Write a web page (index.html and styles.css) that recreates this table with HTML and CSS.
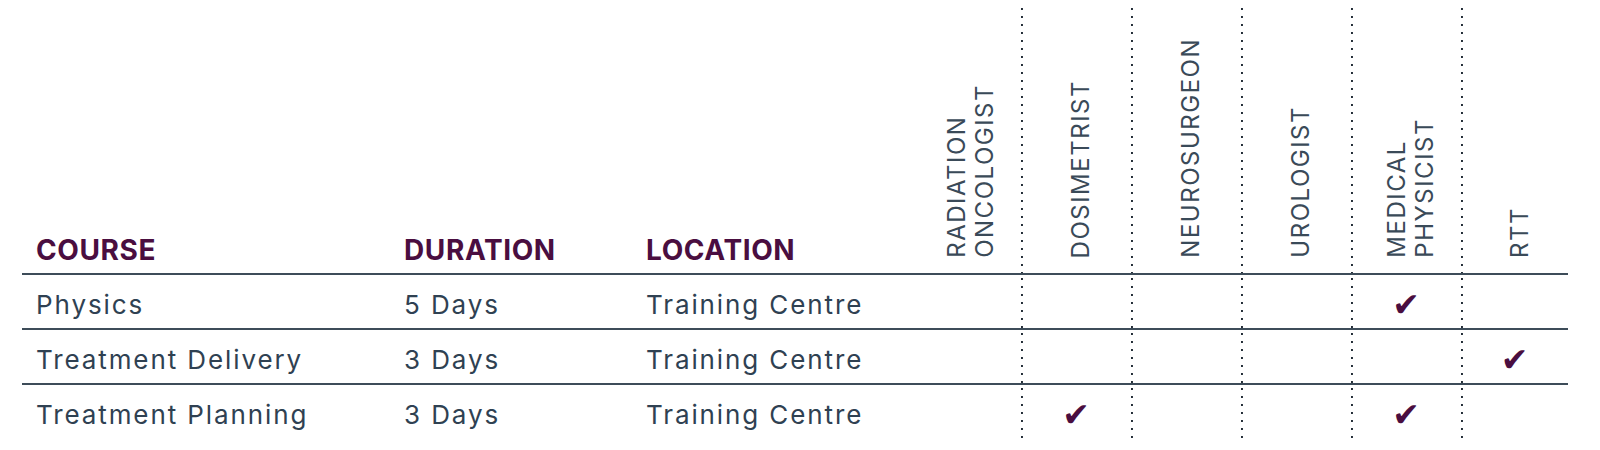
FILE: index.html
```html
<!DOCTYPE html>
<html lang="en">
<head>
<meta charset="utf-8">
<title>Courses</title>
<link rel="stylesheet" href="styles.css">
</head>
<body>
<div class="page">
  <table class="matrix">
    <colgroup>
      <col class="c-course">
      <col class="c-duration">
      <col class="c-location">
      <col class="c-role">
      <col class="c-role">
      <col class="c-role">
      <col class="c-role">
      <col class="c-role">
      <col class="c-rtt">
    </colgroup>
    <thead>
      <tr>
        <th class="h-text">COURSE</th>
        <th class="h-text">DURATION</th>
        <th class="h-text">LOCATION</th>
        <th class="h-role"><div class="vlabel">RADIATION<br>ONCOLOGIST</div></th>
        <th class="h-role sep"><div class="vlabel">DOSIMETRIST</div></th>
        <th class="h-role sep"><div class="vlabel">NEUROSURGEON</div></th>
        <th class="h-role sep"><div class="vlabel">UROLOGIST</div></th>
        <th class="h-role sep"><div class="vlabel">MEDICAL<br>PHYSICIST</div></th>
        <th class="h-role sep"><div class="vlabel">RTT</div></th>
      </tr>
    </thead>
    <tbody>
      <tr>
        <td>Physics</td>
        <td>5 Days</td>
        <td>Training Centre</td>
        <td class="role"></td>
        <td class="role sep"></td>
        <td class="role sep"></td>
        <td class="role sep"></td>
        <td class="role sep"><span class="check">✔</span></td>
        <td class="role sep"></td>
      </tr>
      <tr>
        <td>Treatment Delivery</td>
        <td>3 Days</td>
        <td>Training Centre</td>
        <td class="role"></td>
        <td class="role sep"></td>
        <td class="role sep"></td>
        <td class="role sep"></td>
        <td class="role sep"></td>
        <td class="role sep"><span class="check">✔</span></td>
      </tr>
      <tr class="last">
        <td>Treatment Planning</td>
        <td>3 Days</td>
        <td>Training Centre</td>
        <td class="role"></td>
        <td class="role sep"><span class="check">✔</span></td>
        <td class="role sep"></td>
        <td class="role sep"></td>
        <td class="role sep"><span class="check">✔</span></td>
        <td class="role sep"></td>
      </tr>
    </tbody>
  </table>
</div>
</body>
</html>
```
FILE: styles.css
```css
html, body {
  margin: 0;
  padding: 0;
  background: #ffffff;
}

body {
  font-family: Inter, "Open Sans", "Liberation Sans", sans-serif;
  color: #2f4152;
}

.page {
  padding: 5px 32px 0 22px;
}

.matrix {
  width: 1546px;
  table-layout: fixed;
  border-collapse: separate;
  border-spacing: 0;
}

.c-course { width: 368px; }
.c-duration { width: 242px; }
.c-location { width: 279px; }
.c-role { width: 110px; }
.c-rtt { width: 107px; }

.matrix th {
  box-sizing: border-box;
  height: 268px;
  padding: 0;
  vertical-align: bottom;
  font-weight: normal;
}

.matrix th.h-text {
  text-align: left;
  padding: 0 0 6px 14px;
  font-size: 28px;
  line-height: 34px;
  font-weight: 700;
  letter-spacing: 0.6px;
  color: #4a0e40;
}

.matrix th.h-role {
  text-align: center;
  padding: 0 0 11px 10px;
}

.vlabel {
  display: inline-block;
  writing-mode: vertical-rl;
  transform: rotate(180deg);
  text-align: left;
  font-size: 24px;
  line-height: 28px;
  letter-spacing: 1.5px;
  color: #3a4a58;
}

.sep {
  background-image: radial-gradient(circle, #222c36 1.1px, rgba(255,255,255,0) 1.5px);
  background-size: 3px 8px;
  background-repeat: repeat-y;
  background-position: -1px 0;
}

.matrix td {
  border-top: 2px solid #3d4c59;
  padding: 14px 0 5px 14px;
  font-size: 26px;
  line-height: 32px;
  letter-spacing: 1.9px;
  vertical-align: top;
  white-space: nowrap;
}

.matrix tr.last td {
  padding-bottom: 7px;
}

.matrix td.role {
  padding-left: 0;
  text-align: center;
}

.check {
  font-family: "DejaVu Sans", sans-serif;
  font-size: 33px;
  line-height: 32px;
  letter-spacing: 0;
  color: #4a0e40;
}
```
